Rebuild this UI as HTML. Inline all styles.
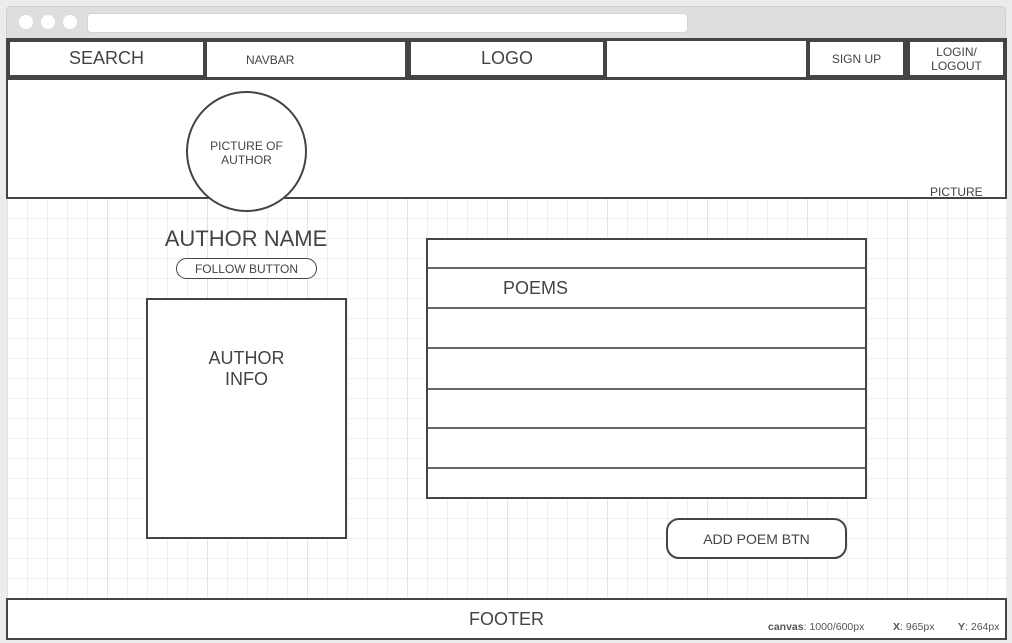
<!DOCTYPE html><html><head><style>
*{margin:0;padding:0;box-sizing:border-box}
body{width:1012px;height:643px;background:#ececec;position:relative;overflow:hidden;font-family:"Liberation Sans",sans-serif;color:#444}
.a{position:absolute}
.c{display:flex;align-items:center;justify-content:center;text-align:center}
</style></head><body>
<div class="a" style="left:6px;top:6px;width:1000px;height:34px;background:#dedede;border-radius:4px 4px 0 0;border:1px solid #d0d0d0"></div>
<div class="a" style="left:19px;top:15px;width:14px;height:14px;border-radius:50%;background:#fff"></div>
<div class="a" style="left:41px;top:15px;width:14px;height:14px;border-radius:50%;background:#fff"></div>
<div class="a" style="left:63px;top:15px;width:14px;height:14px;border-radius:50%;background:#fff"></div>
<div class="a" style="left:87px;top:13px;width:601px;height:20px;border-radius:4px;background:#fff;border:1px solid #d4d4d4"></div>
<div class="a" style="left:7px;top:198px;width:999px;height:400px;background-color:#fff;background-image:linear-gradient(90deg,#e4e4e4 1px,transparent 1px),linear-gradient(90deg,#efefef 1px,transparent 1px),linear-gradient(#efefef 1px,transparent 1px);background-size:100px 100%,20px 100%,100% 20px;background-position:0 0,0 0,0 0"></div>
<div class="a" style="left:6px;top:38px;width:1001px;height:42px;background:#444"></div>
<div class="a c" style="left:10px;top:42px;width:193px;height:33px;background:#fff;font-size:18px">SEARCH</div>
<div class="a" style="left:207px;top:42px;width:198px;height:35px;background:#fff;font-size:12px"><span class="a" style="left:39px;top:11px">NAVBAR</span></div>
<div class="a c" style="left:411px;top:42px;width:192px;height:33px;background:#fff;font-size:18px">LOGO</div>
<div class="a" style="left:607px;top:41px;width:199px;height:36px;background:#fff"></div>
<div class="a c" style="left:810px;top:42px;width:93px;height:33px;background:#fff;font-size:12px">SIGN UP</div>
<div class="a c" style="left:910px;top:42px;width:93px;height:33px;background:#fff;font-size:12px;line-height:14px">LOGIN/<br>LOGOUT</div>
<div class="a" style="left:6px;top:78px;width:1001px;height:121px;background:#fff;border:2px solid #444"></div>
<div class="a" style="left:930px;top:185px;font-size:12px">PICTURE</div>
<div class="a c" style="left:186px;top:91px;width:121px;height:121px;border-radius:50%;background:#fff;border:2px solid #444;font-size:12px;line-height:14px;padding-top:2px">PICTURE OF<br>AUTHOR</div>
<div class="a c" style="left:146px;top:226px;width:200px;height:26px;font-size:22px">AUTHOR NAME</div>
<div class="a c" style="left:176px;top:258px;width:141px;height:21px;border:1px solid #444;border-radius:11px;background:#fff;font-size:12px">FOLLOW BUTTON</div>
<div class="a" style="left:146px;top:298px;width:201px;height:241px;border:2px solid #444;background:#fff"><div class="a c" style="left:0;top:48px;width:197px;font-size:18px;line-height:21px">AUTHOR<br>INFO</div></div>
<div class="a" style="left:426px;top:238px;width:441px;height:261px;border:2px solid #444;background:#fff"></div>
<div class="a" style="left:428px;top:267px;width:437px;height:2px;background:#666"></div>
<div class="a" style="left:428px;top:307px;width:437px;height:2px;background:#666"></div>
<div class="a" style="left:428px;top:347px;width:437px;height:2px;background:#666"></div>
<div class="a" style="left:428px;top:388px;width:437px;height:2px;background:#666"></div>
<div class="a" style="left:428px;top:427px;width:437px;height:2px;background:#666"></div>
<div class="a" style="left:428px;top:467px;width:437px;height:2px;background:#666"></div>
<div class="a" style="left:503px;top:278px;font-size:18px">POEMS</div>
<div class="a c" style="left:666px;top:518px;width:181px;height:41px;border:2px solid #444;border-radius:13px;background:#fff;font-size:14px">ADD POEM BTN</div>
<div class="a c" style="left:6px;top:598px;width:1001px;height:42px;border:2px solid #444;background:#fff;font-size:18px">FOOTER</div>
<div class="a" style="left:768px;top:621px;font-size:10.5px;color:#555"><b>canvas</b>: 1000/600px</div>
<div class="a" style="left:893px;top:621px;font-size:10.5px;color:#555"><b>X</b>: 965px</div>
<div class="a" style="left:958px;top:621px;font-size:10.5px;color:#555"><b>Y</b>: 264px</div>
</body></html>
